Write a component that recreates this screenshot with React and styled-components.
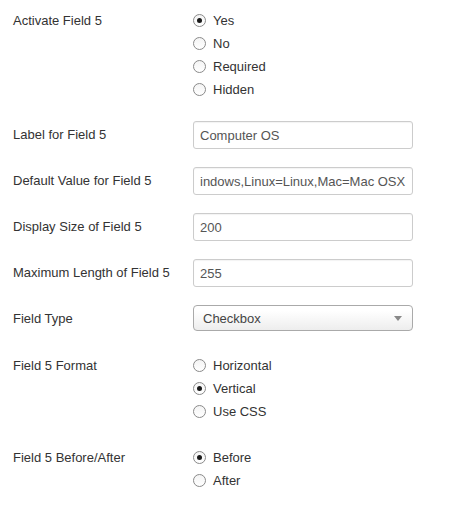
import React from "react";
import styled, { createGlobalStyle } from "styled-components";

const GlobalStyle = createGlobalStyle`
  body {
    margin: 0;
    background: #fff;
    font-family: "Liberation Sans", Arial, sans-serif;
    font-size: 13px;
    color: #333;
  }
`

const Form = styled.div`
  padding: 9px 0 0 13px;
`

const Row = styled.div`
  display: grid;
  grid-template-columns: 180px 220px;
  align-items: start;
  margin-bottom: ${(props) => props.$gap}px;
`

const Label = styled.div`
  line-height: ${(props) => props.$lh}px;
  color: #333;
`

const RadioList = styled.div`
  display: flex;
  flex-direction: column;
`

const RadioItem = styled.label`
  display: flex;
  align-items: center;
  height: 23px;
  gap: 7px;
  color: #333;
`

const Circle = styled.span`
  width: 11px;
  height: 11px;
  border-radius: 50%;
  border: 1px solid #8a8a8a;
  background: linear-gradient(#f4f4f4, #ffffff);
  display: flex;
  align-items: center;
  justify-content: center;
  box-sizing: content-box;

  ${(props) =>
    props.$checked &&
    `
      &::after {
        content: "";
        width: 5px;
        height: 5px;
        border-radius: 50%;
        background: #1a1a1a;
      }
    `}
`

const TextBox = styled.div`
  box-sizing: border-box;
  width: 220px;
  height: 28px;
  border: 1px solid #ccc;
  border-radius: 3px;
  padding: 0 6px;
  display: flex;
  align-items: center;
  overflow: hidden;
  white-space: nowrap;
  color: #555;
  box-shadow: inset 0 1px 1px rgba(0, 0, 0, 0.05);
`

const Select = styled.div`
  box-sizing: border-box;
  width: 220px;
  height: 26px;
  border: 1px solid #aaa;
  border-radius: 4px;
  padding: 0 10px 0 9px;
  display: flex;
  align-items: center;
  justify-content: space-between;
  background: linear-gradient(#ffffff 20%, #ededed 100%);
  color: #444;
`

const Arrow = styled.span`
  width: 0;
  height: 0;
  border-left: 4px solid transparent;
  border-right: 4px solid transparent;
  border-top: 5px solid #888;
  margin-top: 1px;
`

function Radios({ options, value }) {
  return (
    <RadioList>
      {options.map((o) => (
        <RadioItem key={o}>
          <Circle $checked={o === value} />
          {o}
        </RadioItem>
      ))}
    </RadioList>
  )
}

export default function App() {
  return (
    <Form>
      <GlobalStyle />
      <Row $gap={20}>
        <Label $lh={23}>Activate Field 5</Label>
        <Radios options={["Yes", "No", "Required", "Hidden"]} value="Yes" />
      </Row>
      <Row $gap={18}>
        <Label $lh={28}>Label for Field 5</Label>
        <TextBox>Computer OS</TextBox>
      </Row>
      <Row $gap={18}>
        <Label $lh={28}>Default Value for Field 5</Label>
        <TextBox>indows,Linux=Linux,Mac=Mac OSX</TextBox>
      </Row>
      <Row $gap={18}>
        <Label $lh={28}>Display Size of Field 5</Label>
        <TextBox>200</TextBox>
      </Row>
      <Row $gap={18}>
        <Label $lh={28}>Maximum Length of Field 5</Label>
        <TextBox>255</TextBox>
      </Row>
      <Row $gap={21}>
        <Label $lh={28}>Field Type</Label>
        <Select>
          Checkbox
          <Arrow />
        </Select>
      </Row>
      <Row $gap={23}>
        <Label $lh={23}>Field 5 Format</Label>
        <Radios options={["Horizontal", "Vertical", "Use CSS"]} value="Vertical" />
      </Row>
      <Row $gap={23}>
        <Label $lh={23}>Field 5 Before/After</Label>
        <Radios options={["Before", "After"]} value="Before" />
      </Row>
    </Form>
  )
}
